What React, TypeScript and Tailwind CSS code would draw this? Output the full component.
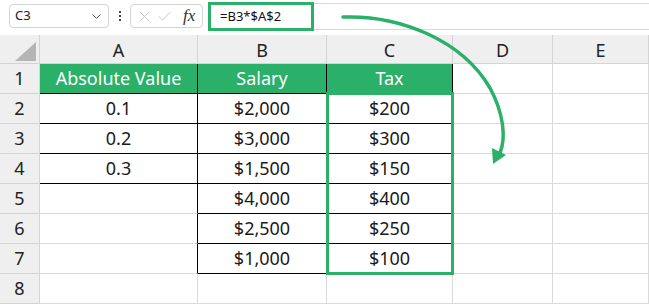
import { Fragment } from "react"
import { ChevronDown, X, Check } from "lucide-react"

const GREEN = "bg-[#2ab069]"

type Cell = { text?: string; cls?: string }

const cols = ["A", "B", "C", "D", "E"]

const K = "border-r-black border-b-black"

// table cells get black borders, the rest keep the gray gridline
const rows: { n: number; cells: Cell[] }[] = [
  {
    n: 1,
    cells: [
      { text: "Absolute Value", cls: `${GREEN} text-white ${K}` },
      { text: "Salary", cls: `${GREEN} text-white ${K}` },
      { text: "Tax", cls: `${GREEN} text-white ${K}` },
      {},
      {},
    ],
  },
  { n: 2, cells: [{ text: "0.1", cls: K }, { text: "$2,000", cls: K }, { text: "$200", cls: K }, {}, {}] },
  { n: 3, cells: [{ text: "0.2", cls: K }, { text: "$3,000", cls: K }, { text: "$300", cls: K }, {}, {}] },
  { n: 4, cells: [{ text: "0.3", cls: K }, { text: "$1,500", cls: K }, { text: "$150", cls: K }, {}, {}] },
  { n: 5, cells: [{ cls: "border-r-black" }, { text: "$4,000", cls: K }, { text: "$400", cls: K }, {}, {}] },
  { n: 6, cells: [{ cls: "border-r-black" }, { text: "$2,500", cls: K }, { text: "$250", cls: K }, {}, {}] },
  { n: 7, cells: [{ cls: "border-r-black" }, { text: "$1,000", cls: K }, { text: "$100", cls: K }, {}, {}] },
  { n: 8, cells: [{}, {}, {}, {}, {}] },
]

function Toolbar() {
  return (
    <div className="h-[35px] flex items-start bg-white">
      <div className="ml-[9px] mt-[4px] w-[100px] h-[24px] rounded-[4px] border border-[#d4d4d4] flex items-center justify-between pl-[5px] pr-[4px]">
        <span className="text-[13px] text-[#222]">C3</span>
        <ChevronDown className="w-[15px] h-[15px] text-[#555]" strokeWidth={1.6} />
      </div>
      <div className="w-[21px] h-[32px] flex flex-col items-center justify-center gap-[2px]">
        <span className="w-[2px] h-[2px] bg-[#444]" />
        <span className="w-[2px] h-[2px] bg-[#444]" />
        <span className="w-[2px] h-[2px] bg-[#444]" />
      </div>
      <div className="mt-[4px] w-[73px] h-[24px] rounded-[4px] border border-[#d4d4d4] flex items-center pl-[5px]">
        <X className="w-[17px] h-[17px] text-[#c4c4c4]" strokeWidth={1.3} />
        <Check className="w-[17px] h-[17px] ml-[3px] text-[#c4c4c4]" strokeWidth={1.3} />
        <span className="ml-[10px] text-[17px] italic text-[#333] [font-family:'Liberation_Serif',serif]">fx</span>
      </div>
      <div className="ml-[5px] mt-[2px] w-[106px] h-[29px] border-[3px] border-[#2ab069] flex items-center pl-[9px] text-[13px] text-[#111]">
        =B3*$A$2
      </div>
      <div className="flex-1 mt-[3px] h-[27px] border-y border-[#d9d9d9]" />
    </div>
  )
}

function Grid() {
  return (
    <div className="relative grid grid-cols-[40px_158px_129px_126px_100px_96px] grid-rows-[29px_repeat(8,30px)]">
      {/* corner */}
      <div className="bg-[#efefef] border-r border-b border-[#d4d4d4] relative">
        <svg className="absolute left-[15px] top-[7px]" width="21" height="19" viewBox="0 0 21 19">
          <polygon points="21,0 21,19 0,19" fill="#b5b5b5" />
        </svg>
      </div>
      {cols.map((c) => (
        <div
          key={c}
          className="bg-[#efefef] border-r border-b border-[#d4d4d4] flex items-center justify-center text-[18px] text-[#222] pt-[2px]"
        >
          {c}
        </div>
      ))}
      {rows.map((r) => (
        <Fragment key={r.n}>
          <div className="bg-[#efefef] border-r border-b border-[#d4d4d4] flex items-center justify-center text-[18px] text-[#222]">
            {r.n}
          </div>
          {r.cells.map((cell, i) => (
            <div
              key={i}
              className={`border-r border-b border-[#dadada] flex items-center justify-center text-[18px] text-[#1a1a1a] ${cell.cls ?? ""}`}
            >
              {cell.text}
            </div>
          ))}
        </Fragment>
      ))}
      {/* selected range C2:C7 */}
      <div className="absolute left-[326px] top-[57px] w-[128px] h-[183px] border-[3px] border-[#2ab069] pointer-events-none" />
    </div>
  )
}

export default function App() {
  return (
    <div className="relative w-[649px] h-[304px] overflow-hidden bg-white [font-family:'Noto_Sans',sans-serif]">
      <Toolbar />
      <Grid />
      <svg className="absolute left-0 top-0 pointer-events-none" width="649" height="304" viewBox="0 0 649 304">
        <path
          d="M343 17 C400 15 462 40 490 88 C504 114 506 138 500 153"
          fill="none"
          stroke="#2ab069"
          strokeWidth="3.5"
          strokeLinecap="round"
        />
        <polygon points="493,164 492,148 506,155" fill="#2ab069" />
      </svg>
    </div>
  )
}
